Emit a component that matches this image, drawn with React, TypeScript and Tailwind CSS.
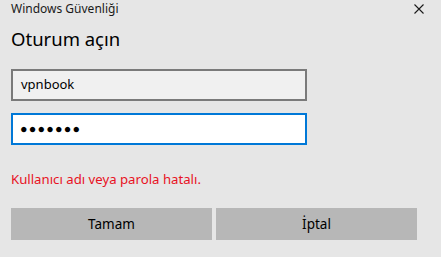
export default function App() {
  return (
    <div className="h-[257px] w-[441px] overflow-hidden bg-[#e6e6e6] font-['Noto_Sans',sans-serif] text-black">
      <div className="flex h-[18px] items-start justify-between pl-[11px] pr-[17px]">
        <span className="mt-[1px] text-[12px] leading-[16px] text-[#1a1a1a]">Windows Güvenliği</span>
        <svg className="mt-[4px]" width="10" height="10" viewBox="0 0 10 10" fill="none" stroke="#1a1a1a" strokeWidth="1.1">
          <path d="M0.5 0.5 L9.5 9.5 M9.5 0.5 L0.5 9.5" />
        </svg>
      </div>

      <h1 className="mt-[8px] pl-[11px] text-[18.5px] leading-[26px]">Oturum açın</h1>

      <div className="mt-[17px] flex flex-col gap-[12px] pl-[11px]">
        <div className="flex h-[32px] w-[296px] items-center border-2 border-[#7a7a7a] bg-[#f0f0f0] pl-[8px] text-[13px]">
          vpnbook
        </div>
        <div className="flex h-[32px] w-[296px] items-center border-2 border-[#0078d7] bg-white pl-[7px] text-[12.5px] tracking-[1.2px]">
          ●●●●●●●
        </div>
      </div>

      <p className="mt-[24px] pl-[11px] text-[13.2px] leading-[20px] text-[#e81123]">Kullanıcı adı veya parola hatalı.</p>

      <div className="mt-[19px] flex gap-[4px] pl-[11px]">
        <button className="h-[32px] w-[201px] bg-[#b7b7b7] text-[13.5px]">Tamam</button>
        <button className="h-[32px] w-[201px] bg-[#b7b7b7] text-[13.5px]">İptal</button>
      </div>
    </div>
  )
}
